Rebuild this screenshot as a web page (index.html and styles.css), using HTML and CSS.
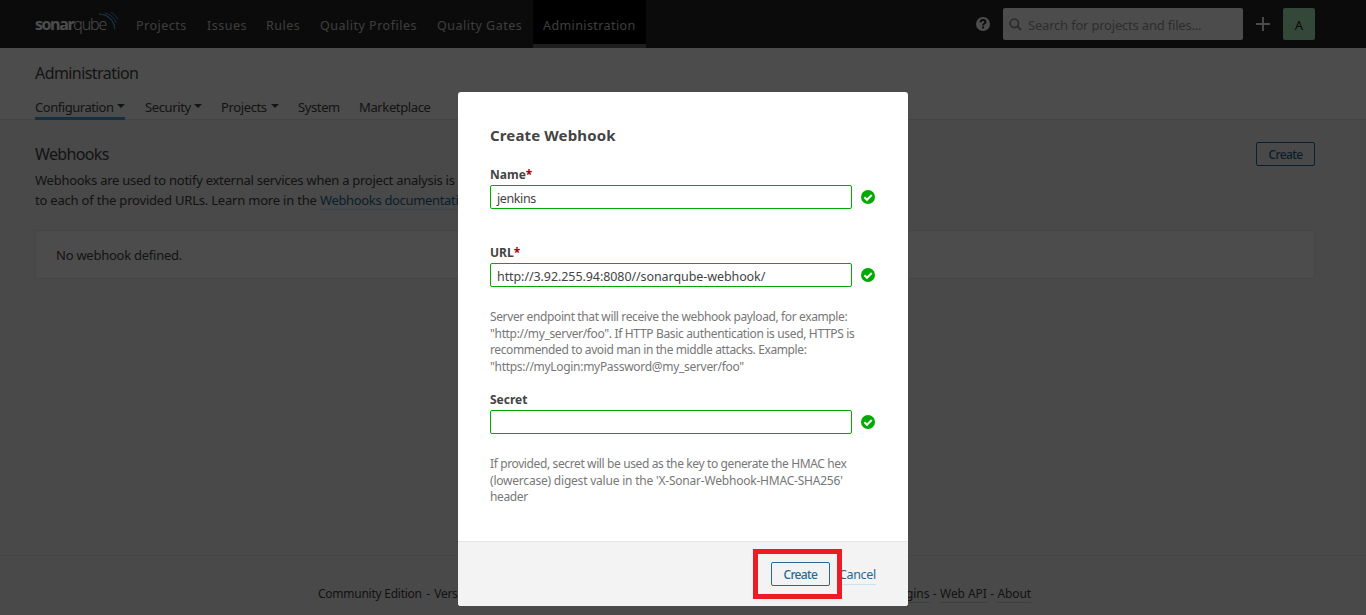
FILE: index.html
```html
<!DOCTYPE html>
<html lang="en">
<head>
<meta charset="utf-8">
<title>Webhooks - Administration</title>
<link rel="stylesheet" href="styles.css">
</head>
<body>
<div class="page">
  <header class="topbar">
    <div class="logo">
      <span class="logo-text"><b>sonar</b><span class="logo-qube">qube</span></span>
      <svg class="logo-waves" width="22" height="20" viewBox="0 0 22 20" fill="none" stroke="#4b9fd5" stroke-width="1">
        <path d="M2 3.200C10 3 17.500 9 17.700 18" stroke-width="1.3"/><path d="M8 1.800C13.500 3.500 17.500 7 19.500 12"/><path d="M14 1.300C17 2.800 19 5 20.700 8"/>
      </svg>
    </div>
    <nav class="topnav">
      <a class="w71">Projects</a><a class="w59">Issues</a><a class="w54">Rules</a><a class="w117">Quality Profiles</a><a class="w106">Quality Gates</a><a class="w113 active">Administration</a>
    </nav>
    <div class="tools">
      <svg class="help" width="14" height="14" viewBox="0 0 14 14"><circle cx="7" cy="7" r="7" fill="#fff"/><path d="M4.500 5.300C4.700 3.700 5.800 3.100 7.100 3.100C8.600 3.100 9.500 3.900 9.500 5C9.500 6.600 7.100 6.500 7.100 8.400" fill="none" stroke="#262626" stroke-width="2"/><rect x="6.100" y="9.400" width="2" height="2" fill="#262626"/></svg>
      <div class="search">
        <svg width="13" height="13" viewBox="0 0 13 13" fill="none" stroke="#999" stroke-width="1.900"><circle cx="5.300" cy="5.300" r="4.200"/><path d="M8.300 8.300L12 12" stroke-width="2.200"/></svg>
        <span>Search for projects and files...</span>
      </div>
      <svg class="plus" width="14" height="14" viewBox="0 0 14 14"><path d="M7 0V14M0 7H14" stroke="#fff" stroke-width="1.900"/></svg>
      <div class="avatar">A</div>
    </div>
  </header>
  <div class="context">
    <h1>Administration</h1>
    <nav class="tabs">
      <a class="tab selected t-config"><span>Configuration</span><i class="caret"></i></a>
      <a class="tab t-sec"><span>Security</span><i class="caret"></i></a>
      <a class="tab t-proj"><span>Projects</span><i class="caret"></i></a>
      <a class="tab t-sys">System</a>
      <a class="tab">Marketplace</a>
    </nav>
  </div>
  <main class="content">
    <div class="heading"><h2>Webhooks</h2><button class="button">Create</button></div>
    <p class="description">Webhooks are used to notify external services when a project analysis is<br><span class="second">to each of the provided URLs. Learn more in the <a class="link">Webhooks documentation</a>.</span></p>
    <div class="box">No webhook defined.</div>
  </main>
  <footer class="footer"><div class="foot-left">Community Edition <i>-</i> Version</div><div class="foot-right"><a>Plugins</a> <i>-</i> <a>Web API</a> <i>-</i> <a>About</a></div></footer>
</div>
<div class="overlay">
  <section class="modal">
    <div class="modal-body">
      <h2 class="modal-title">Create Webhook</h2>
      <div class="field">
        <label>Name<em>*</em></label>
        <div class="row"><div class="input t-name">jenkins</div><svg width="14" height="14" viewBox="0 0 14 14"><circle cx="7" cy="7" r="7" fill="#0a0"/><path d="M3.400 7.200L6 9.700L10.700 5" fill="none" stroke="#fff" stroke-width="2.100"/></svg></div>
      </div>
      <div class="field">
        <label>URL<em>*</em></label>
        <div class="row"><div class="input">http://3.92.255.94:8080//sonarqube-webhook/</div><svg width="14" height="14" viewBox="0 0 14 14"><circle cx="7" cy="7" r="7" fill="#0a0"/><path d="M3.400 7.200L6 9.700L10.700 5" fill="none" stroke="#fff" stroke-width="2.100"/></svg></div>
        <p class="hint">Server endpoint that will receive the webhook payload, for example:<br><span class="mid">"http://my_server/foo". If HTTP Basic authentication is used, HTTPS is</span><br>recommended to avoid man in the middle attacks. Example:<br><span class="wide">"https://myLogin:myPassword@my_server/foo"</span></p>
      </div>
      <div class="field">
        <label>Secret</label>
        <div class="row"><div class="input"></div><svg width="14" height="14" viewBox="0 0 14 14"><circle cx="7" cy="7" r="7" fill="#0a0"/><path d="M3.400 7.200L6 9.700L10.700 5" fill="none" stroke="#fff" stroke-width="2.100"/></svg></div>
        <p class="hint">If provided, secret will be used as the key to generate the HMAC hex<br><span class="wider">(lowercase) digest value in the 'X-Sonar-Webhook-HMAC-SHA256'</span><br>header</p>
      </div>
    </div>
    <div class="modal-foot"><button class="button">Create</button><a class="link cancel">Cancel</a><div class="highlight"></div></div>
  </section>
</div>
</body>
</html>
```
FILE: styles.css
```css
* { box-sizing: border-box; }
body { margin: 0; font: 13px/20px "Noto Sans", sans-serif; color: #444; background: #f3f3f3; overflow: hidden; }
h1, h2, p { margin: 0; font-weight: 400; }
.page { height: 615px; display: flex; flex-direction: column; }
.topbar { height: 48px; flex: none; background: #262626; display: flex; padding: 0 51px 0 35px; }
.logo { width: 91px; display: flex; position: relative; padding-top: 13px; color: #fff; }
.logo-text { font: 16px/22px "Open Sans", sans-serif; letter-spacing: -1.4px; }
.logo-qube { font-weight: 300; letter-spacing: -1.1px; }
.logo-waves { position: absolute; left: 62px; top: 11px; }
.topnav { display: flex; }
.topnav a { height: 48px; padding: 4px 0 0 10px; line-height: 43px; color: #ccc; letter-spacing: .5px; font-size: 12.5px; white-space: nowrap; }
.topnav .active { background: #000; border-bottom: 4px solid #666; letter-spacing: .4px; }
.w71 { width: 71px; } .w59 { width: 59px; } .w54 { width: 54px; }
.w117 { width: 117px; } .w106 { width: 106px; } .w113 { width: 113px; }
.tools { margin-left: auto; display: flex; align-items: center; }
.help { margin-right: 13px; }
.search { width: 240px; height: 32px; background: #fff; border-radius: 2px; display: flex; align-items: center; padding-left: 6px; gap: 6px; color: #999; letter-spacing: -.2px; }
.search span { padding-top: 2px; }
.plus { margin: 0 13px; }
.avatar { width: 32px; height: 32px; border-radius: 2px; background: #aaf0be; color: #222; text-align: center; line-height: 34px; }
.context { height: 72px; flex: none; background: #fff; border-bottom: 1px solid #e6e6e6; padding: 15px 35px 0; }
h1, .heading h2 { font-size: 16px; letter-spacing: -.57px; line-height: 21px; }
.tabs { display: flex; margin-top: 13px; height: 23px; }
.tab { height: 23px; display: flex; justify-content: space-between; font-size: 13px; letter-spacing: -.38px; line-height: 20px; }
.selected { border-bottom: 3px solid #4b9fd5; letter-spacing: -.45px; }
.t-config { width: 90px; margin-right: 20px; } .t-sec { width: 57px; margin-right: 19px; }
.t-proj { width: 58px; margin-right: 19px; } .t-sys { width: 42px; margin-right: 19px; }
.caret { border: 4px solid transparent; border-top-color: #444; margin-top: 7px; height: 4px; border-bottom: 0; }
.content { padding: 22px 51px 0 35px; flex: 1; }
.heading { display: flex; justify-content: space-between; height: 28px; }
.heading h2 { line-height: 24px; letter-spacing: -.65px; }
.button { height: 24px; width: 59px; border: 1px solid #236a97; border-radius: 2px; background: none; color: #236a97; font: 500 12px/22px "Noto Sans", sans-serif; padding: 1px 0 0; letter-spacing: -.65px; }
.description { letter-spacing: -.26px; width: 900px; white-space: nowrap; }
.second { letter-spacing: -.2px; }
.second .link { letter-spacing: -.33px; }
.link { color: #236a97; border-bottom: 1px solid #cae3f2; }
.box { margin-top: 20px; height: 49px; background: #fff; border: 1px solid #e6e6e6; padding: 14px 20px; letter-spacing: -.25px; }
.footer { height: 60px; border-top: 1px solid #e6e6e6; display: flex; justify-content: space-between; padding: 28px 335px 0 318px; font-size: 12px; letter-spacing: -.1px; }
.foot-left { letter-spacing: -.25px; }
.footer a { border-bottom: 1px solid #cfcfcf; }
.footer i { font-style: normal; margin: 0 1.5px; }
.foot-right i { margin: 0 .5px; }
.overlay { position: absolute; inset: 0; background: rgba(0,0,0,.7); padding: 92px 0 0 458px; }
.modal { width: 450px; height: 514px; background: #fff; border-radius: 3px; overflow: hidden; }
.modal-body { height: 449px; padding: 32px; }
.modal-title { font-size: 15px; font-weight: 700; line-height: 22px; height: 40px; letter-spacing: .13px; }
.field label { display: block; font-weight: 700; font-size: 12px; line-height: 22px; height: 21px; }
.field em { color: #a40000; font-style: normal; }
.row { display: flex; gap: 9px; align-items: center; height: 24px; }
.field + .field { margin-top: 33px; }
.field + .field + .field { margin-top: 13px; }
.input { width: 362px; height: 24px; border: 1px solid #0a0; border-radius: 2px; padding: 3px 6px; line-height: 20px; font-size: 12.500px; letter-spacing: -.08px; }
.t-name { letter-spacing: -.4px; }
.hint { padding-top: 22px; font-size: 12px; line-height: 16.700px; color: #777; white-space: nowrap; letter-spacing: -.38px; }
.hint .mid { letter-spacing: -.34px; }
.hint .wide { letter-spacing: -.3px; }
.hint .wider { letter-spacing: -.21px; }
.modal-foot { position: relative; height: 65px; border-top: 1px solid #e6e6e6; background: #f3f3f3; display: flex; justify-content: flex-end; align-items: flex-start; padding: 20px 32px 0; gap: 9px; }
.cancel { line-height: 18px; margin-top: 4px; letter-spacing: -.3px; font-size: 12.500px; }
.highlight { position: absolute; left: 295px; top: 7px; width: 89px; height: 50px; border: 5px solid #ed1c24; }
```
